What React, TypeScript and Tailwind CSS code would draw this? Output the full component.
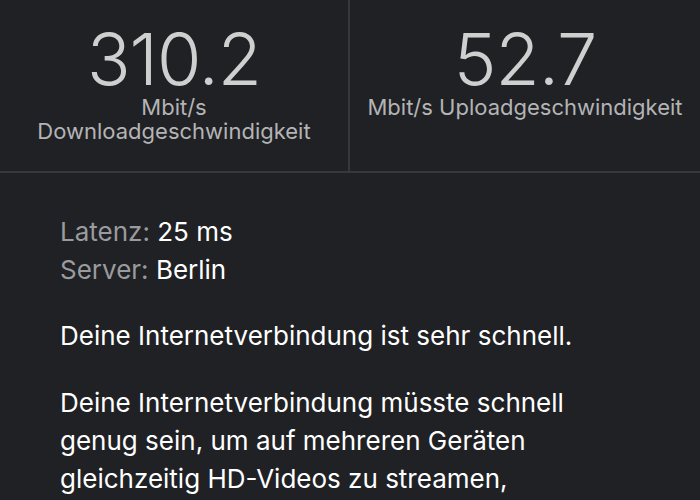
import React from "react";

const speeds = [
  { value: "310.2", label: ["Mbit/s", "Downloadgeschwindigkeit"] },
  { value: "52.7", label: ["Mbit/s Uploadgeschwindigkeit"] },
];

export default function App() {
  return (
    <main
      className="w-[700px] h-[500px] overflow-hidden bg-[#202124] text-white"
      style={{ fontFamily: "Inter, 'Noto Sans', sans-serif" }}
    >
      {/* Speed tiles */}
      <div className="grid grid-cols-2 h-[173px] border-b-2 border-[#37383b]">
        {speeds.map((s, i) => (
          <div
            key={i}
            className={`flex flex-col items-center pt-[23px] ${i === 0 ? "border-r-2 border-[#37383b]" : ""}`}
          >
            <span className="text-[72px] leading-[72px] font-light text-[#cfcfd0] tracking-[-1px]">{s.value}</span>
            {s.label.map((l) => (
              <span key={l} className="text-[22px] leading-[24px] text-[#b4b4b6] text-center whitespace-nowrap">
                {l}
              </span>
            ))}
          </div>
        ))}
      </div>

      {/* Details */}
      <div className="pl-[60px] pr-10 pt-[40px] text-[26px] leading-[38px]">
        <p>
          <span className="text-[#9a9b9e]">Latenz: </span>
          <span className="text-white">25 ms</span>
        </p>
        <p>
          <span className="text-[#9a9b9e]">Server: </span>
          <span className="text-white">Berlin</span>
        </p>
        <p className="mt-[28px]">Deine Internetverbindung ist sehr schnell.</p>
        <p className="mt-[29px] max-w-[540px]">
          Deine Internetverbindung müsste schnell genug sein, um auf mehreren Geräten gleichzeitig HD-Videos zu
          streamen, Videoanrufe zu führen und Onlinespiele zu spielen.
        </p>
      </div>
    </main>
  );
}
